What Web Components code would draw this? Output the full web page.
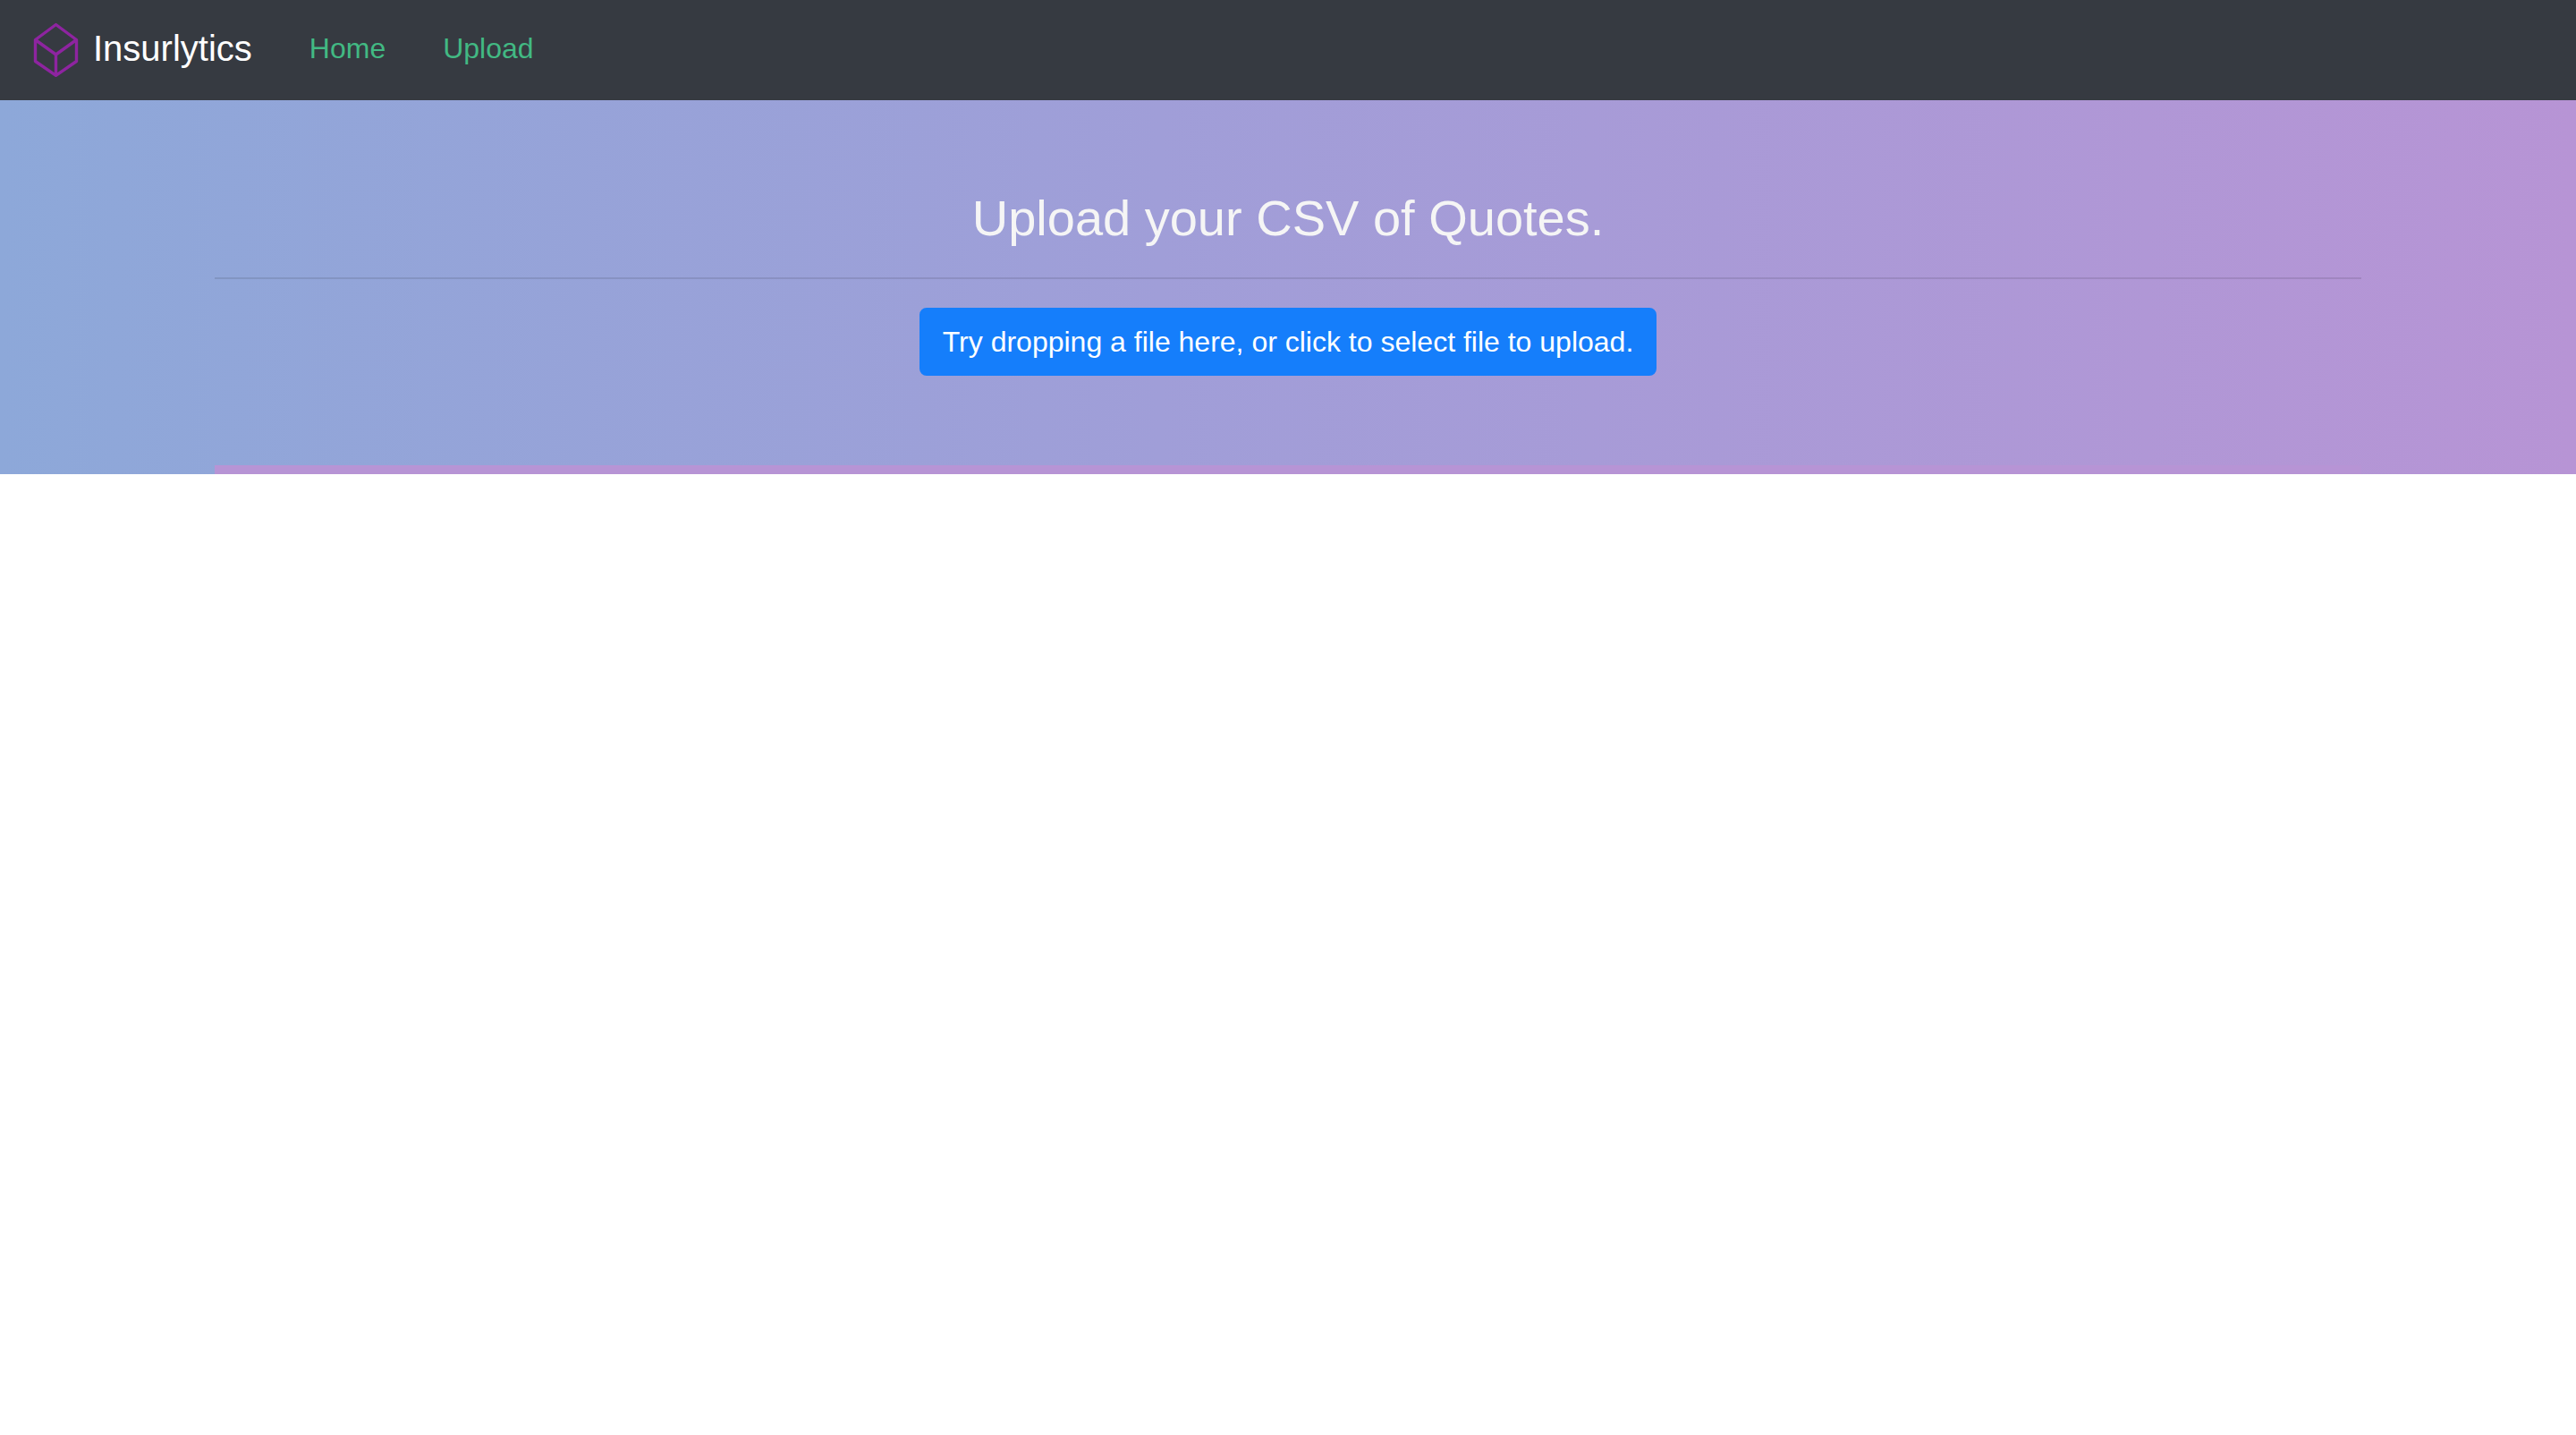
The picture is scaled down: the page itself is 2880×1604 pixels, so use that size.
<!DOCTYPE html>
<html lang="en">
<head>
  <meta charset="utf-8">
  <title>Insurlytics</title>
  <style>
    body {
      margin: 0;
      background-color: #fff;
      font-family: "Helvetica Neue", Helvetica, "Liberation Sans", Arial, sans-serif;
      font-size: 32px;
      line-height: 48px;
    }
  </style>
</head>
<body>
  <nav-bar brand="Insurlytics">
    <nav-link href="#home">Home</nav-link>
    <nav-link href="#upload">Upload</nav-link>
  </nav-bar>
  <upload-hero title-text="Upload your CSV of Quotes.">
    <file-drop>Try dropping a file here, or click to select file to upload.</file-drop>
  </upload-hero>

  <script>
    class NavBar extends HTMLElement {
      constructor() {
        super();
        this.attachShadow({ mode: 'open' });
      }

      connectedCallback() {
        const brand = this.getAttribute('brand') || '';

        this.shadowRoot.innerHTML = `
          <style>
            :host {
              display: block;
              background-color: #363a41;
            }
            nav {
              display: flex;
              align-items: center;
              padding: 14px 32px 18px;
            }
            .brand {
              display: flex;
              align-items: center;
              gap: 12px;
              margin-right: 32px;
              color: #fff;
              font-size: 40px;
              line-height: 60px;
              text-decoration: none;
            }
            svg {
              display: block;
              width: 60px;
              height: 64px;
            }
            .links {
              display: flex;
            }
          </style>
          <nav>
            <a class="brand" href="#home">
              <svg viewBox="0 0 60 64" fill="none" stroke="#8e24a0" stroke-width="3.4" stroke-linejoin="round" aria-hidden="true">
                <path d="M30.500 5.500L53.500 22.500V46.500L30.500 62.300L7.500 46.500V22.500Z M7.500 22.500L30.500 39L53.500 22.500 M30.500 39V62"/>
              </svg>
              <span>${brand}</span>
            </a>
            <div class="links"><slot></slot></div>
          </nav>
        `;
      }
    }

    class NavLink extends HTMLElement {
      constructor() {
        super();
        this.attachShadow({ mode: 'open' });
      }

      connectedCallback() {
        const href = this.getAttribute('href') || '#';

        this.shadowRoot.innerHTML = `
          <style>
            :host {
              display: block;
            }
            a {
              display: block;
              padding: 16px 32px;
              color: #42b983;
              text-decoration: none;
            }
            a:hover {
              text-decoration: underline;
            }
          </style>
          <a href="${href}"><slot></slot></a>
        `;
      }
    }

    class UploadHero extends HTMLElement {
      constructor() {
        super();
        this.attachShadow({ mode: 'open' });
      }

      connectedCallback() {
        const titleText = this.getAttribute('title-text') || '';

        this.shadowRoot.innerHTML = `
          <style>
            :host {
              display: block;
              padding: 98px 32px 0;
              background-image: linear-gradient(to right, #8da8d9, #a09ed8 45%, #b794d5);
            }
            .container {
              max-width: 2400px;
              margin: 0 auto;
              text-align: center;
            }
            h3 {
              margin: 0;
              color: #f5f5f5;
              font-size: 56px;
              font-weight: 400;
              line-height: 68px;
            }
            hr {
              margin: 32px 0;
              border: 0;
              border-top: 2px solid rgba(0, 0, 0, 0.1);
            }
            .bar {
              height: 10px;
              margin-top: 100px;
              background-color: #b794d5;
            }
          </style>
          <div class="container">
            <h3>${titleText}</h3>
            <hr>
            <slot></slot>
            <div class="bar"></div>
          </div>
        `;
      }
    }

    class FileDrop extends HTMLElement {
      constructor() {
        super();
        this.attachShadow({ mode: 'open' });
      }

      connectedCallback() {
        this.shadowRoot.innerHTML = `
          <style>
            :host {
              display: flex;
              justify-content: center;
            }
            button {
              padding: 12px 24px;
              border: 2px solid #157efb;
              border-radius: 8px;
              background-color: #157efb;
              color: #fff;
              font: inherit;
              cursor: pointer;
            }
            button:hover {
              background-color: #0069d9;
            }
          </style>
          <button type="button"><slot></slot></button>
          <input type="file" accept=".csv" aria-label="CSV file" hidden>
        `;

        // The button opens the hidden file picker
        const button = this.shadowRoot.querySelector('button');
        const input = this.shadowRoot.querySelector('input');
        button.addEventListener('click', () => input.click());

        button.addEventListener('dragover', (event) => event.preventDefault());
        button.addEventListener('drop', (event) => {
          event.preventDefault();
          input.files = event.dataTransfer.files;
        });
      }
    }

    customElements.define('nav-bar', NavBar);
    customElements.define('nav-link', NavLink);
    customElements.define('upload-hero', UploadHero);
    customElements.define('file-drop', FileDrop);
  </script>
</body>
</html>
